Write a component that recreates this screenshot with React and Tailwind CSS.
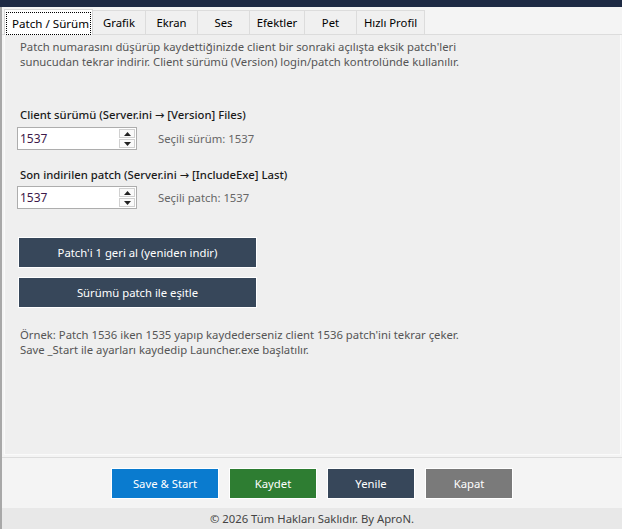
import { useState } from "react";

const tabs = ["Patch / Sürüm", "Grafik", "Ekran", "Ses", "Efektler", "Pet", "Hızlı Profil"];
const tabWidths = ["w-[89px]", "w-[53px]", "w-[52px]", "w-[52px]", "w-[55px]", "w-[52px]", "w-[68px]"];

function Spin({ value }) {
  return (
    <div className="flex h-[23px] w-[120px] items-stretch border border-[#adadad] bg-white">
      <div className="flex flex-1 items-center pl-[2px] text-[12px] text-[#3d1a4a]">{value}</div>
      <div className="my-[1px] mr-[1px] flex w-[16px] flex-col gap-[1px]">
        <div className="flex flex-1 items-center justify-center border border-[#d0d0d0] bg-[#fafafa]">
          <svg width="7" height="4" viewBox="0 0 7 4"><path d="M0 4 L3.5 0 L7 4 Z" fill="#222" /></svg>
        </div>
        <div className="flex flex-1 items-center justify-center border border-[#d0d0d0] bg-[#fafafa]">
          <svg width="7" height="4" viewBox="0 0 7 4"><path d="M0 0 L3.5 4 L7 0 Z" fill="#222" /></svg>
        </div>
      </div>
    </div>
  );
}

const Arrow = () => <span className="font-['DejaVu_Sans',sans-serif] leading-none">→</span>;

export default function App() {
  const [active, setActive] = useState(0);

  return (
    <div className="flex h-[529px] w-[622px] flex-col bg-[#f4f4f4] font-['Noto_Sans','Open_Sans',sans-serif] text-[11.3px] leading-[15px]">
      {/* title strip */}
      <div className="h-[7px] shrink-0 bg-[#1e2a44]" />

      <div className="flex flex-1 flex-col border-l-2 border-[#a8a8a8]">
        {/* tab strip */}
        <div className="flex h-[28px] shrink-0 items-end border-b border-[#dcdcdc] pl-[2px]">
          {tabs.map((t, i) =>
            i === active ? (
              <button
                key={t}
                onClick={() => setActive(i)}
                className={`relative z-10 -mb-px flex h-[26px] items-center border border-b-0 border-[#d6d6d6] bg-white px-[1px] pt-[1px] ${tabWidths[i]}`}
              >
                <span className="flex h-[23px] w-full items-center whitespace-nowrap border border-dotted border-black pl-[5px] text-[11.6px] text-black">
                  {t}
                </span>
              </button>
            ) : (
              <button
                key={t}
                onClick={() => setActive(i)}
                className={`flex h-[24px] items-center justify-center whitespace-nowrap border border-l-0 border-b-0 border-[#dcdcdc] bg-[#f0f0f0] pb-[1px] text-black ${tabWidths[i]}`}
              >
                {t}
              </button>
            )
          )}
        </div>

        {/* panel */}
        <div className="ml-[2px] mr-[1px] flex h-[420px] shrink-0 flex-col border border-t-0 border-[#fafafa] bg-[#efefef] pl-[12px] pt-[4px]">
          <p className="ml-[3px] text-[#555]">
            Patch numarasını düşürüp kaydettiğinizde client bir sonraki açılışta eksik patch'leri
            <br />
            sunucudan tekrar indirir. Client sürümü (Version) login/patch kontrolünde kullanılır.
          </p>

          <div className="ml-[3px] mt-[38px] h-[15px] font-medium text-[#1a1a1a]">
            Client sürümü (Server.ini <Arrow /> [Version] Files)
          </div>
          <div className="mt-[5px] flex items-center gap-[21px]">
            <Spin value="1537" />
            <span className="text-[#666]">Seçili sürüm: 1537</span>
          </div>

          <div className="ml-[3px] mt-[17px] h-[15px] font-medium text-[#1a1a1a]">
            Son indirilen patch (Server.ini <Arrow /> [IncludeExe] Last)
          </div>
          <div className="mt-[4px] flex items-center gap-[21px]">
            <Spin value="1537" />
            <span className="text-[#666]">Seçili patch: 1537</span>
          </div>

          <button className="ml-[1px] mt-[28px] h-[31px] w-[239px] border border-white bg-[#37475a] text-white">
            Patch'i 1 geri al (yeniden indir)
          </button>
          <button className="ml-[1px] mt-[9px] h-[31px] w-[239px] border border-white bg-[#37475a] text-white">
            Sürümü patch ile eşitle
          </button>

          <p className="ml-[3px] mt-[19px] text-[#555]">
            Örnek: Patch 1536 iken 1535 yapıp kaydederseniz client 1536 patch'ini tekrar çeker.
            <br />
            Save _Start ile ayarları kaydedip Launcher.exe başlatılır.
          </p>
        </div>

        {/* action bar */}
        <div className="mt-[2px] flex h-[51px] shrink-0 items-center justify-center gap-[10px] border-t border-[#dcdcdc] pt-[1px]">
          <button className="h-[31px] w-[108px] border border-white bg-[#0a7bcf] text-white">Save &amp; Start</button>
          <button className="h-[31px] w-[88px] border border-white bg-[#2e7d32] text-white">Kaydet</button>
          <button className="h-[31px] w-[88px] border border-white bg-[#37475a] text-white">Yenile</button>
          <button className="h-[31px] w-[88px] border border-white bg-[#7a7a7a] text-white">Kapat</button>
        </div>

        {/* footer */}
        <div className="flex flex-1 items-center justify-center bg-[#e8e8e8] text-[#444]">
          © 2026 Tüm Hakları Saklıdır. By AproN.
        </div>
      </div>
    </div>
  );
}
